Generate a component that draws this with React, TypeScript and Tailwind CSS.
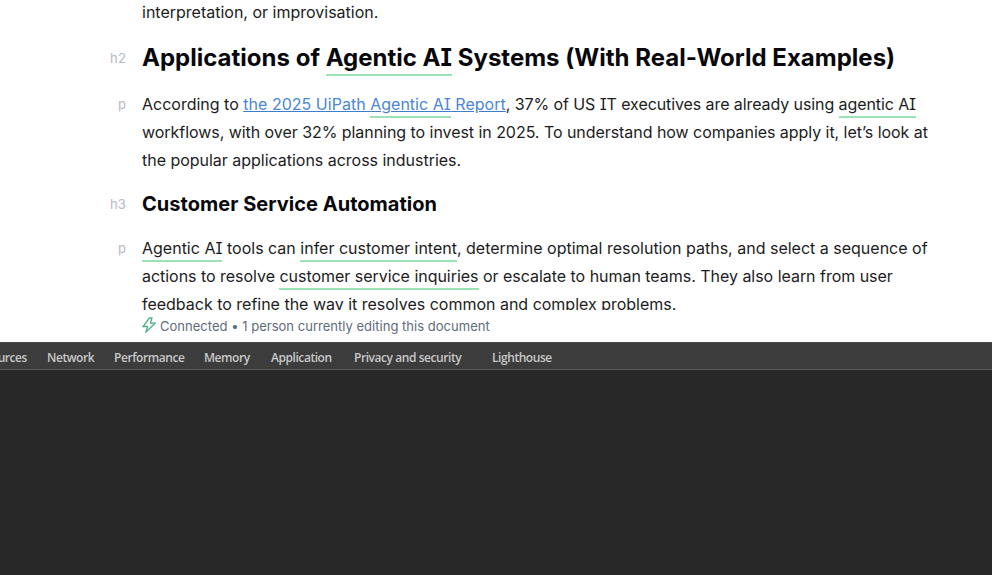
import React from "react";

function Mark({ children }: { children: React.ReactNode }) {
  return <span className="border-b-2 border-[#9be3b5] pb-0.5">{children}</span>;
}

function Row({ tag, tagClass, className, children }: { tag: string; tagClass: string; className: string; children: React.ReactNode }) {
  return (
    <div className="flex">
      <div className={`w-[126px] shrink-0 text-right text-[#b4bac2] text-[13px] tracking-[0.15px] ${tagClass}`}>{tag}</div>
      <div className={`ml-4 w-[796px] shrink-0 [font-feature-settings:'cv08'] ${className}`}>{children}</div>
    </div>
  );
}

export default function App() {
  return (
    <div className="flex h-[575px] w-[992px] flex-col overflow-hidden bg-white font-['Inter',sans-serif]">
      <div className="h-[310px] shrink-0 overflow-hidden">
        <div className="-mt-0.5 ml-[142px] text-base leading-7 text-[#1c1c22]">interpretation, or improvisation.</div>
        <div className="mt-[14px]">
          <Row tag="h2" tagClass="leading-[36px]" className="text-2xl leading-[36px] font-bold tracking-[0.01px] text-[#08080c]">
            Applications of <Mark>Agentic AI</Mark> Systems (With Real-World Examples)
          </Row>
        </div>
        <div className="mt-[14px]">
          <Row tag="p" tagClass="leading-7" className="text-base leading-7 text-[#1c1c22]">
            According to{" "}
            <span className="text-[#4a86d6] underline decoration-[#3f7cc9] tracking-[0.02px]">
              the 2025 UiPath <Mark>Agentic AI</Mark> Report
            </span>
            <span className="tracking-[-0.09px]">, 37% of US IT executives are already using <Mark>agentic AI</Mark></span>{" "}
            <span className="tracking-[-0.05px]">workflows, with over 32% planning to invest in 2025. To understand how companies apply it, let’s look at</span>{" "}
            <span className="tracking-[-0.02px]">the popular applications across industries.</span>
          </Row>
        </div>
        <div className="mt-4">
          <Row tag="h3" tagClass="leading-7" className="text-xl leading-7 font-bold tracking-[0.03px] text-[#08080c]">
            Customer Service Automation
          </Row>
        </div>
        <div className="mt-4">
          <Row tag="p" tagClass="leading-7" className="text-base leading-7 text-[#1c1c22]">
            <Mark>Agentic AI</Mark> tools can <Mark>infer customer intent</Mark>, determine optimal resolution paths, and select a sequence of{" "}
            <span className="tracking-[-0.03px]">actions to resolve <Mark>customer service inquiries</Mark> or escalate to human teams. They also learn from user</span>{" "}
            <span className="tracking-[-0.01px]">feedback to refine the way it resolves common and complex problems.</span>
          </Row>
        </div>
      </div>
      <div className="flex h-8 shrink-0 items-start pl-[142px] pt-1.5 text-[13px] leading-5 tracking-[0.02px] text-[#5f6b7a]">
        <svg className="mr-1 mt-[1px]" width="14" height="16" viewBox="0 0 14 16" fill="none" stroke="#4fb286" strokeWidth="1.3" strokeLinejoin="miter">
          <path d="M7.5 1 1 9.5h4.5L4 15l9-8.8H8.5L10 1z" />
        </svg>
        <span>Connected • 1 person currently editing this document</span>
      </div>
      <div className="flex h-7 shrink-0 items-center border-b border-[#5a5a5a] border-t border-t-[#4a4a4a] bg-[#3c3c3c] pt-[3px] text-xs font-semibold text-[#c8c8c8] font-['Open_Sans',sans-serif] tracking-[-0.44px]">
        <div className="flex w-[47px] justify-end overflow-hidden whitespace-nowrap"><span className="mr-[20px]">Sources</span></div>
        <span className="w-[67px]">Network</span>
        <span className="w-[90px]">Performance</span>
        <span className="w-[67px]">Memory</span>
        <span className="w-[83px]">Application</span>
        <span className="w-[138px]">Privacy and security</span>
        <span>Lighthouse</span>
      </div>
      <div className="flex-1 bg-[#282828]" />
    </div>
  );
}
